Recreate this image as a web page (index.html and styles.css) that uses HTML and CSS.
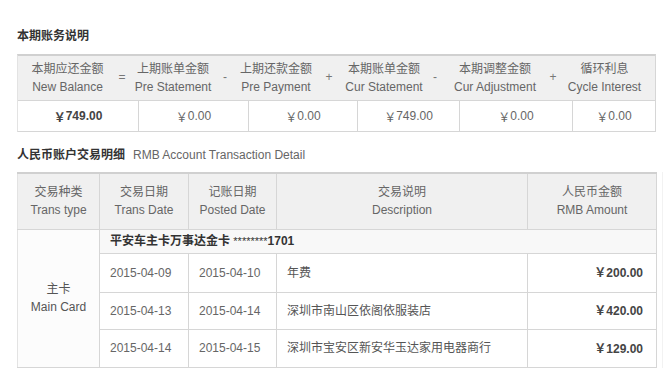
FILE: index.html
```html
<!DOCTYPE html>
<html lang="zh-CN">
<head>
<meta charset="utf-8">
<title>本期账务说明</title>
<link rel="stylesheet" href="styles.css">
</head>
<body>
<div class="page">
  <h2 class="title">本期账务说明</h2>
  <div class="summary">
    <div class="sum-head">
      <div class="sh c1"><span>本期应还金额</span><span>New Balance</span></div>
      <div class="op o1">=</div>
      <div class="sh c2"><span>上期账单金额</span><span>Pre Statement</span></div>
      <div class="op o2">-</div>
      <div class="sh c3"><span>上期还款金额</span><span>Pre Payment</span></div>
      <div class="op o3">+</div>
      <div class="sh c4"><span>本期账单金额</span><span>Cur Statement</span></div>
      <div class="op o4">-</div>
      <div class="sh c5"><span>本期调整金额</span><span>Cur Adjustment</span></div>
      <div class="op o5">+</div>
      <div class="sh c6"><span>循环利息</span><span>Cycle Interest</span></div>
    </div>
    <div class="sum-body">
      <div class="sb strong"><span class="yen">￥</span>749.00</div>
      <div class="sb"><span class="yen">￥</span>0.00</div>
      <div class="sb"><span class="yen">￥</span>0.00</div>
      <div class="sb"><span class="yen">￥</span>749.00</div>
      <div class="sb"><span class="yen">￥</span>0.00</div>
      <div class="sb"><span class="yen">￥</span>0.00</div>
    </div>
  </div>

  <h2 class="title title2">人民币账户交易明细<span class="en">RMB Account Transaction Detail</span></h2>
  <div class="detail-wrap">
    <table class="detail">
      <colgroup>
        <col class="w1"><col class="w2"><col class="w3"><col class="w4"><col class="w5">
      </colgroup>
      <thead>
        <tr class="hrow">
          <th>交易种类<br>Trans type</th>
          <th>交易日期<br>Trans Date</th>
          <th>记账日期<br>Posted Date</th>
          <th>交易说明<br>Description</th>
          <th>人民币金额<br>RMB Amount</th>
        </tr>
      </thead>
      <tbody>
        <tr class="card-row">
          <td class="type" rowspan="4">主卡<br>Main Card</td>
          <td class="card" colspan="4">平安车主卡万事达金卡 <span class="mask">********</span>1701</td>
        </tr>
        <tr class="r1">
          <td>2015-04-09</td>
          <td>2015-04-10</td>
          <td class="desc">年费</td>
          <td class="amt"><span class="yen">￥</span>200.00</td>
        </tr>
        <tr class="r2">
          <td>2015-04-13</td>
          <td>2015-04-14</td>
          <td class="desc">深圳市南山区依阁依服装店</td>
          <td class="amt"><span class="yen">￥</span>420.00</td>
        </tr>
        <tr class="r3">
          <td>2015-04-14</td>
          <td>2015-04-15</td>
          <td class="desc">深圳市宝安区新安华玉达家用电器商行</td>
          <td class="amt"><span class="yen">￥</span>129.00</td>
        </tr>
      </tbody>
    </table>
  </div>
</div>
</body>
</html>
```

FILE: styles.css
```css
html, body {
  margin: 0;
  padding: 0;
  background: #ffffff;
}
body {
  font-family: "Liberation Sans", Arial, "Noto Sans CJK SC", sans-serif;
  font-size: 12px;
  color: #555;
}
.page {
  padding: 27px 0 0 17px;
}
.title {
  margin: 0;
  font-size: 12px;
  line-height: 18px;
  font-weight: bold;
  color: #333;
}
.title2 {
  margin-top: 14px;
}
.title2 .en {
  font-weight: normal;
  color: #666;
  margin-left: 8px;
}
.summary {
  width: 639px;
  margin-top: 9px;
  border-left: 1px solid #e3e3e3;
  border-right: 1px solid #d6d6d6;
  border-top: 2px solid #d0d0d0;
  border-bottom: 1px solid #d6d6d6;
  box-sizing: border-box;
}
.sum-head {
  display: flex;
  height: 44px;
  background: #f0f0f0;
  color: #666;
  align-items: center;
}
.sh {
  display: flex;
  flex-direction: column;
  align-items: center;
  line-height: 18px;
  white-space: nowrap;
}
.op {
  display: flex;
  justify-content: center;
  white-space: nowrap;
  color: #777;
  margin-top: -2px;
}
.c1 { width: 99px; }
.o1 { width: 10px; }
.c2 { width: 92px; }
.o2 { width: 12px; }
.c3 { width: 90px; }
.o3 { width: 16px; }
.c4 { width: 94px; }
.o4 { width: 8px; }
.c5 { width: 112px; }
.o5 { width: 4px; }
.c6 { width: 99px; }
.sum-body {
  display: grid;
  grid-template-columns: 120px 110px 109px 102px 113px 83px;
  border-top: 1px solid #d6d6d6;
  height: 30px;
}
.sb {
  display: flex;
  align-items: center;
  justify-content: center;
  border-left: 1px solid #d6d6d6;
  color: #666;
}
.sb:first-child {
  border-left: none;
}
.sb.strong {
  font-weight: bold;
  color: #444;
}
.yen {
  font-family: "Noto Sans CJK SC", sans-serif;
  font-weight: normal;
}
.strong .yen, .amt .yen {
  font-weight: bold;
}
.detail-wrap {
  margin-top: 8px;
  width: 645px;
  border-right: 1px solid #f2f2f2;
}
.detail {
  width: 639px;
  table-layout: fixed;
  border-collapse: collapse;
  border-top: 2px solid #d0d0d0;
}
.w1 { width: 82px; }
.w2 { width: 89px; }
.w3 { width: 88px; }
.w4 { width: 251px; }
.w5 { width: 129px; }
.detail th, .detail td {
  border: 1px solid #d6d6d6;
  padding: 0;
  font-weight: normal;
  line-height: 18px;
}
.detail th {
  background: #f0f0f0;
  color: #666;
  text-align: center;
}
.detail td:first-child, .detail th:first-child {
  border-left-color: #e3e3e3;
}
.hrow { height: 56px; }
.card-row { height: 24px; }
.r1 { height: 39px; }
.r2 { height: 37px; }
.r3 { height: 38px; }
.detail td {
  color: #666;
  padding-left: 10px;
}
.detail td.type {
  text-align: center;
  padding: 0;
  color: #555;
  background: #fcfcfc;
}
.detail td.card {
  background: #f8f8f8;
  font-weight: bold;
  color: #333;
  padding-left: 10px;
}
.card .mask {
  font-weight: normal;
  font-size: 11px;
}
.detail td.desc {
  padding-left: 10px;
  color: #555;
}
.detail td.amt {
  text-align: right;
  padding: 0 13px 0 0;
  font-weight: bold;
  color: #444;
}
```
